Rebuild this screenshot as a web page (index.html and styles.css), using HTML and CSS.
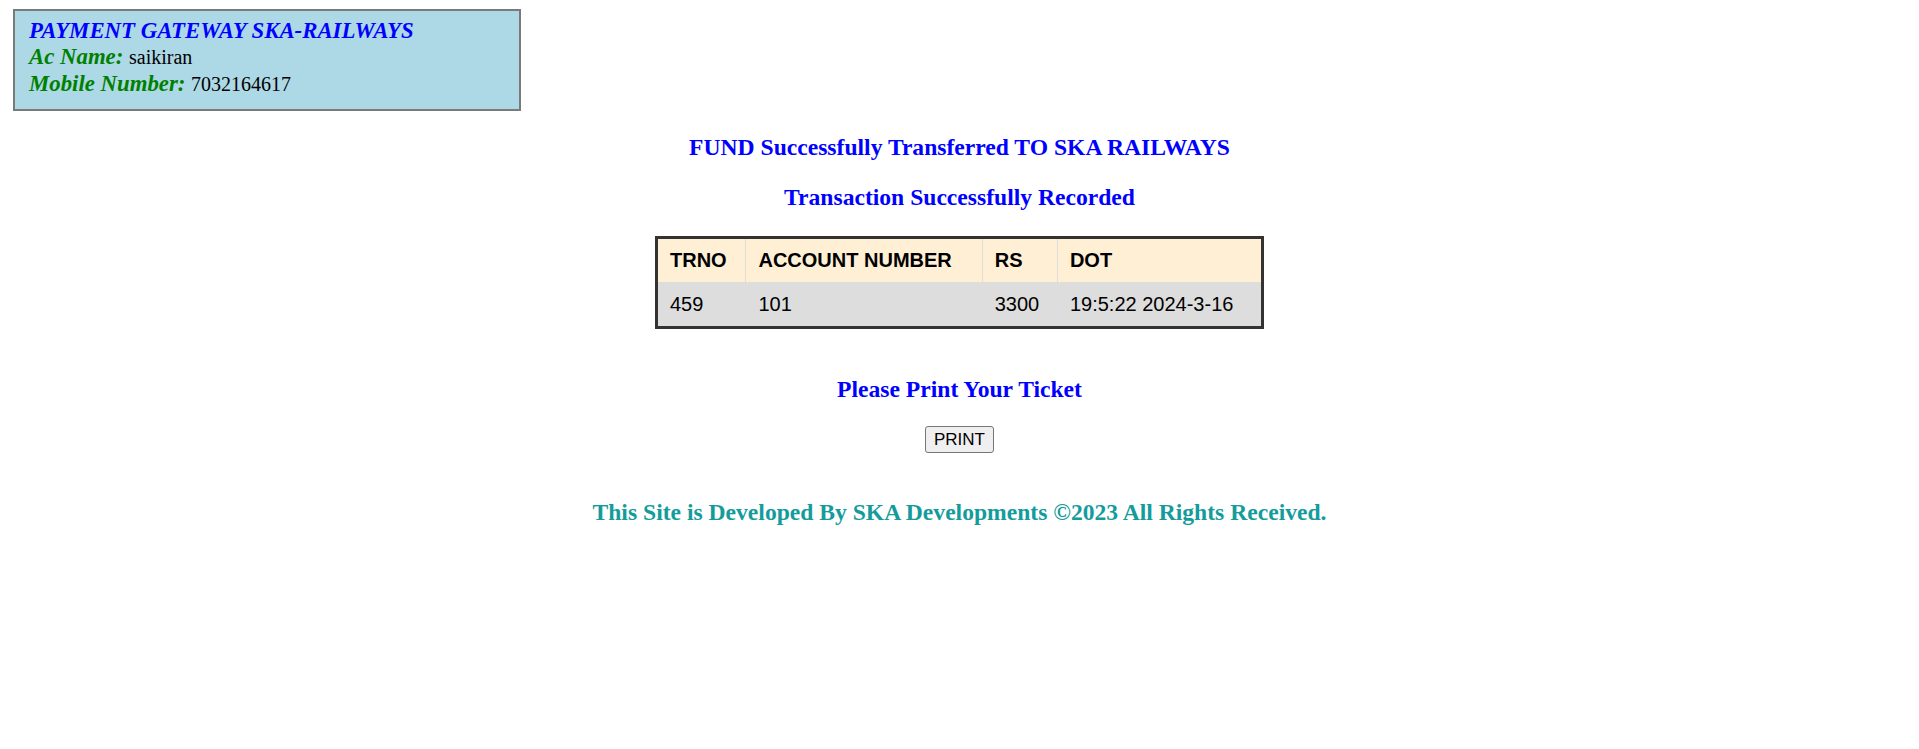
FILE: index.html
```html
<!DOCTYPE html>
<html lang="en">
<head>
<meta charset="utf-8">
<title>Payment Gateway SKA-Railways</title>
<link rel="stylesheet" href="styles.css">
</head>
<body>
  <div class="account-box">
    <div class="gateway-title">PAYMENT GATEWAY SKA-RAILWAYS</div>
    <div class="account-row"><span class="label">Ac Name:</span> <span class="value">saikiran</span></div>
    <div class="account-row"><span class="label">Mobile Number:</span> <span class="value">7032164617</span></div>
  </div>

  <main class="receipt">
    <h2 class="headline headline-first">FUND Successfully Transferred TO SKA RAILWAYS</h2>
    <h2 class="headline headline-second">Transaction Successfully Recorded</h2>

    <table class="txn-table">
      <thead>
        <tr>
          <th>TRNO</th>
          <th>ACCOUNT NUMBER</th>
          <th>RS</th>
          <th>DOT</th>
        </tr>
      </thead>
      <tbody>
        <tr>
          <td>459</td>
          <td>101</td>
          <td>3300</td>
          <td>19:5:22 2024-3-16</td>
        </tr>
      </tbody>
    </table>

    <h2 class="headline headline-print">Please Print Your Ticket</h2>
    <div class="print-wrap"><button class="print-btn" type="button">PRINT</button></div>

    <h2 class="footer-note">This Site is Developed By SKA Developments &copy;2023 All Rights Received.</h2>
  </main>
</body>
</html>
```

FILE: styles.css
```css
html, body {
  background: #ffffff;
}

body {
  margin: 8px;
  font-family: "Liberation Serif", "Times New Roman", serif;
  color: #000;
}

.account-box {
  margin: 1px 0 0 5px;
  width: 25%;
  padding: 7px 14px 12px;
  border: 2px solid #7a7a7a;
  background: #add8e6;
}

.gateway-title,
.account-row {
  font-size: 22.8px;
  line-height: 25.8px;
}

.gateway-title {
  font-weight: bold;
  font-style: italic;
  color: #0000ff;
}

.label {
  font-weight: bold;
  font-style: italic;
  color: #008000;
}

.value {
  font-size: 20px;
  color: #000;
}

.receipt {
  display: flex;
  flex-direction: column;
  align-items: center;
}

.headline,
.footer-note {
  margin: 0;
  font-family: "Liberation Serif", "Times New Roman", serif;
  font-size: 23.6px;
  font-weight: bold;
  line-height: normal;
  text-align: center;
  color: #0000ff;
}

.headline-first {
  margin-top: 22.5px;
}

.headline-second {
  margin-top: 23.5px;
}

.txn-table {
  margin-top: 25.1px;
  width: 609px;
  border-collapse: collapse;
  border: 3px solid #333333;
  font-family: "Liberation Sans", Arial, sans-serif;
  font-size: 20px;
  line-height: 22px;
}

.txn-table th,
.txn-table td {
  padding: 10px 12px 11px;
  text-align: left;
  border: 1px solid #dddddd;
}

.txn-table th {
  background: #ffefd5;
  font-weight: bold;
}

.txn-table td {
  background: #dddddd;
}

.headline-print {
  margin-top: 46.5px;
}

.print-wrap {
  margin-top: 22.7px;
}

.print-btn {
  font-family: "Liberation Sans", Arial, sans-serif;
  font-size: 17px;
  line-height: 21px;
  padding: 2px 8px;
  color: #000;
  background: #efefef;
  border: 1px solid #767676;
  border-radius: 3px;
}

.footer-note {
  margin-top: 46.5px;
  color: #149c9c;
}
```
